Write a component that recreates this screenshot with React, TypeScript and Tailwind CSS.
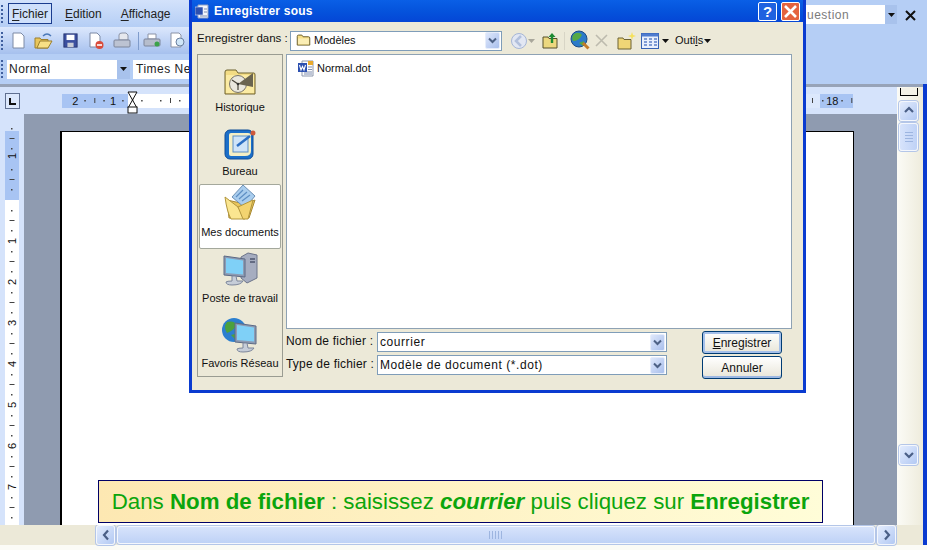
import type { ReactNode } from 'react';

const Grip = () => (
  <div className="flex flex-col gap-[2px] w-[3px] shrink-0">
    {[0, 1, 2, 3, 4].map((i) => (
      <div key={i} className="w-[2px] h-[2px] bg-[#3f5f9f]" />
    ))}
  </div>
);

const Chevron = ({ dir }: { dir: 'up' | 'down' | 'left' | 'right' }) => {
  const d = {
    up: 'M2 7 L6 3 L10 7',
    down: 'M2 4 L6 8 L10 4',
    left: 'M8 1.5 L4 6 L8 10.5',
    right: 'M4 1.5 L8 6 L4 10.5',
  }[dir];
  return (
    <svg width="12" height="12" viewBox="0 0 12 12">
      <path d={d} fill="none" stroke="#4a5f86" strokeWidth="2.2" />
    </svg>
  );
};

const ScrollBtn = ({ dir }: { dir: 'up' | 'down' | 'left' | 'right' }) => (
  <div className="w-[19px] h-[20px] shrink-0 flex items-center justify-center rounded-[3px] border border-[#f4f7fd] shadow-[0_0_0_1px_#b4c6e8] bg-gradient-to-br from-[#e3ecfd] to-[#b3c9f3]">
    <Chevron dir={dir} />
  </div>
);

const ComboArrow = () => (
  <div className="w-[15px] h-[17px] shrink-0 flex items-center justify-center rounded-[2px] border border-[#e6edfb] bg-gradient-to-br from-[#dfe8fb] to-[#a9bfec]">
    <svg width="9" height="7" viewBox="0 0 9 7">
      <path d="M1 1.5 L4.5 5 L8 1.5" fill="none" stroke="#4d6185" strokeWidth="2" />
    </svg>
  </div>
);

const SmallDrop = () => (
  <svg width="7" height="4" viewBox="0 0 7 4">
    <path d="M0 0 H7 L3.5 4 Z" fill="#111" />
  </svg>
);

const Folder = ({ size = 18 }: { size?: number }) => (
  <svg width={size} height={size} viewBox="0 0 18 18">
    <path d="M1.5 4 Q1.5 2.5 3 2.5 H7 L8.5 4.5 H15 Q16.5 4.5 16.5 6 V14.5 H1.5 Z" fill="#f7df86" stroke="#6e6230" strokeWidth="1.2" />
    <path d="M2.5 6.5 H15.5 V13.5 H2.5 Z" fill="#fbeeb4" />
  </svg>
);

const WordDoc = () => (
  <svg width="18" height="18" viewBox="0 0 18 18">
    <path d="M5 1 H16 V16 H5 Z" fill="#fdfdfd" stroke="#8c97ad" />
    <path d="M11 1 H16 V5 H11 Z" fill="#e9a92d" />
    <path d="M11 7 H15 M11 9.5 H15 M7 12 H15 M7 14 H15" stroke="#7e8db0" />
    <rect x="1" y="3" width="9" height="9" fill="#2c50b0" />
    <path d="M2.5 5 L4 10 L5.5 6.5 L7 10 L8.5 5" fill="none" stroke="#fff" strokeWidth="1.1" />
  </svg>
);

const HistoryIcon = () => (
  <svg width="34" height="30" viewBox="0 0 34 30">
    <path d="M2 5 Q2 3 4 3 H13 L15 6 H31 Q32 6 32 8 V27 H2 Z" fill="#f3dc84" stroke="#6e6230" />
    <path d="M3 8 H31 V26 H3 Z" fill="#fbeba3" />
    <circle cx="15" cy="17" r="8.5" fill="#e9e7de" stroke="#77736a" />
    <path d="M15 17 L30 6 L30 20 Z" fill="#6a6450" />
    <path d="M15 17 L9 13 M15 17 L15 23" stroke="#47443a" strokeWidth="1.2" />
    <circle cx="15" cy="17" r="1.3" fill="#333" />
  </svg>
);

const DesktopIcon = () => (
  <svg width="34" height="34" viewBox="0 0 34 34">
    <rect x="2" y="3" width="28" height="29" rx="5" fill="#1b6fc9" stroke="#0f4d97" />
    <path d="M6 8 Q6 6 8 6 H25 Q28 6 28 9 V24 Q28 29 22 29 H8 Q6 29 6 27 Z" fill="#f5efc5" />
    <rect x="10" y="9" width="15" height="16" fill="#cfe4f8" stroke="#5c8fc6" />
    <path d="M14 19 L27 9" stroke="#2a6ec2" strokeWidth="2.5" />
    <circle cx="30" cy="6" r="2.5" fill="#cf5a3c" />
  </svg>
);

const DocsIcon = () => (
  <svg width="34" height="38" viewBox="0 0 34 38">
    <path d="M4 16 L6 34 H26 L32 16 L22 20 Z" fill="#e9c65b" stroke="#a98a34" />
    <path d="M9 13 L20 1 L32 12 L22 24 Z" fill="#a9cdee" stroke="#6d90b4" />
    <path d="M13 13 L20 6 M16 15 L24 8 M19 17 L27 11" stroke="#5e8fc4" strokeWidth="1.2" />
    <path d="M2 13 L15 23 L22 35 H8 Q4 28 2 13 Z" fill="#fbe690" stroke="#b2963d" />
    <path d="M15 23 L30 16 L25 35 H20 Z" fill="#f3d470" stroke="#b2963d" />
  </svg>
);

const Monitor = ({ x, y }: { x: number; y: number }) => (
  <g transform={`translate(${x} ${y})`}>
    <path d="M1 1 L22 4 V22 L1 20 Z" fill="#8d9bb3" stroke="#5d6a85" />
    <path d="M3 3 L20 5.5 V19.5 L3 18 Z" fill="#7fd0f7" />
    <path d="M9 21 L13 21 L14 26 H20 Q18 30 9 30 Q3 30 3 27 Q4 26 9 26 Z" fill="#c6cdd8" stroke="#7c869b" />
  </g>
);

const ComputerIcon = () => (
  <svg width="38" height="36" viewBox="0 0 38 36">
    <path d="M20 5 L27 1 L36 3 V26 L26 31 L20 26 Z" fill="#a6adc0" stroke="#6c7489" />
    <path d="M29 7 H34 M29 10 H34" stroke="#4d566d" strokeWidth="1.3" />
    <Monitor x={2} y={3} />
  </svg>
);

const NetworkIcon = () => (
  <svg width="38" height="36" viewBox="0 0 38 36">
    <circle cx="13" cy="13" r="12" fill="#2c7fcf" />
    <path d="M6 5 Q13 3 16 8 Q12 14 6 16 Q2 10 6 5 Z M10 18 L18 16 L16 24 Z" fill="#4ca13d" />
    <Monitor x={13} y={5} />
  </svg>
);

const ToolIcon = ({ children }: { children: ReactNode }) => (
  <div className="w-[25px] h-[24px] shrink-0 flex items-center justify-center">{children}</div>
);

const MainTool = ({ children }: { children: ReactNode }) => (
  <div className="w-[26px] h-[24px] shrink-0 flex items-center justify-center">{children}</div>
);

const Place = ({ label, icon, box, selected }: { label: string; icon: ReactNode; box: string; selected?: boolean }) => (
  <div
    className={`w-[82px] shrink-0 flex flex-col items-center justify-end rounded-[2px] ${box} ${
      selected ? 'bg-white border border-[#a4a89c]' : ''
    }`}
  >
    <div className="flex-1 flex items-end justify-center">{icon}</div>
    <span className="mt-[3px] leading-[14px] whitespace-nowrap">{label}</span>
  </div>
);

const Field = ({ label, value }: { label: string; value: string }) => (
  <div className="flex items-center h-[20px]">
    <span className="w-[91px] shrink-0 pb-[2px] text-[12px] tracking-[0.2px] text-[#111] whitespace-nowrap">{label}</span>
    <div className="w-[290px] h-[20px] pl-[2px] pr-[1px] flex items-center justify-between bg-white border border-[#7f9db9]">
      <span className="text-[12px] tracking-[0.57px] text-[#111]">{value}</span>
      <ComboArrow />
    </div>
  </div>
);

const DlgButton = ({ children, primary }: { children: ReactNode; primary?: boolean }) => (
  <div
    className={`w-[80px] h-[23px] flex items-center justify-center rounded-[3px] border border-[#003c74] text-[12px] text-[#111] bg-gradient-to-b from-white to-[#e8e5d8] ${
      primary ? 'shadow-[inset_0_0_0_2px_#a5c0ea]' : 'shadow-[inset_0_-2px_0_#9db8e2]'
    }`}
  >
    {children}
  </div>
);

const Dialog = () => (
  <div className="absolute left-[189px] top-0 w-[617px] h-[393px] flex flex-col border-x-[3px] border-b-[3px] border-[#0a3bd0] bg-[#ece9d8] text-[11px] text-[#111]">
    <div className="h-[22px] shrink-0 flex items-center pl-[3px] pr-[3px] bg-gradient-to-b from-[#0a5fe6] via-[#0553dc] to-[#0546d6]">
      <svg width="14" height="15" viewBox="0 0 14 15">
        <path d="M3 1 H13 V14 H3 Z" fill="#f4f6fb" stroke="#8fa0c4" />
        <rect x="0" y="3" width="8" height="8" fill="#2c50b0" stroke="#dfe6f7" strokeWidth="0.6" />
        <path d="M9 5 H12 M9 8 H12 M5 12 H12" stroke="#7e8db0" />
      </svg>
      <span className="ml-[5px] text-[12px] font-bold text-white tracking-[0.2px]">Enregistrer sous</span>
      <div className="ml-auto flex items-center gap-[4px]">
        <div className="w-[19px] h-[19px] flex items-center justify-center rounded-[2px] border border-white bg-[#1f62e0] text-white text-[15px] font-bold leading-none">
          ?
        </div>
        <div className="w-[19px] h-[19px] flex items-center justify-center rounded-[2px] border border-white bg-[#e4633f]">
          <svg width="15" height="15" viewBox="0 0 15 15">
            <path d="M2 2 L13 13 M13 2 L2 13" stroke="#fff" strokeWidth="2.6" />
          </svg>
        </div>
      </div>
    </div>
    <div className="h-[32px] shrink-0 flex items-center pl-[5px] pt-[5px]">
      <span className="w-[93px] shrink-0 pb-[4px] text-[11.5px] whitespace-nowrap">Enregistrer dans :</span>
      <div className="w-[212px] h-[20px] flex items-center justify-between pl-[5px] pr-[1px] bg-white border border-[#7f9db9]">
        <div className="flex items-center gap-[3px]">
          <Folder size={15} />
          <span>Modèles</span>
        </div>
        <ComboArrow />
      </div>
      <div className="ml-[4px] flex items-center">
        <ToolIcon>
          <svg width="20" height="20" viewBox="0 0 20 20">
            <circle cx="10" cy="10" r="7.5" fill="#e2e7f3" stroke="#a6b6d6" />
            <path d="M12 5 L7 10 L12 15" fill="none" stroke="#b2c0dc" strokeWidth="2.5" />
          </svg>
        </ToolIcon>
        <div className="w-[6px] -ml-[3px] mr-[3px] opacity-30">
          <SmallDrop />
        </div>
        <ToolIcon>
          <svg width="18" height="18" viewBox="0 0 18 18">
            <path d="M2 5 H7 L8 6.5 H16 V16 H2 Z" fill="#ecd87f" stroke="#57512c" />
            <path d="M11 11 V4" stroke="#1d8a32" strokeWidth="2.4" />
            <path d="M7.5 5 L11 1 L14.5 5 Z" fill="#1d8a32" />
          </svg>
        </ToolIcon>
        <div className="w-px h-[18px] bg-[#d8d5c6] ml-[2px] mr-[3px]" />
        <ToolIcon>
          <svg width="21" height="21" viewBox="0 0 21 21">
            <circle cx="9" cy="9" r="8" fill="#2b7ac9" stroke="#1c4b86" />
            <path d="M4 4 Q9 1 12 5 Q9 11 3 11 Q1 7 4 4 Z M9 13 L14 11 L13 16 Z" fill="#57a943" />
            <path d="M13 13 L18.5 18.5" stroke="#c37b2a" strokeWidth="3" />
          </svg>
        </ToolIcon>
        <div className="-ml-[4px]">
          <ToolIcon>
            <svg width="15" height="15" viewBox="0 0 15 15">
              <path d="M2 2 L13 13 M13 2 L2 13" stroke="#bdbbae" strokeWidth="1.6" />
            </svg>
          </ToolIcon>
        </div>
        <ToolIcon>
          <svg width="20" height="19" viewBox="0 0 20 19">
            <path d="M1 7 H6 L7 8.5 H14 V18 H1 Z" fill="#f0d676" stroke="#6d6232" />
            <path d="M15 1 L16 4 L19 5 L16 6 L15 9 L14 6 L11 5 L14 4 Z" fill="#f6e15b" />
          </svg>
        </ToolIcon>
        <div className="ml-[2px] flex items-center gap-[3px]">
          <svg width="18" height="16" viewBox="0 0 18 16">
            <rect x="0.5" y="0.5" width="17" height="15" fill="#e8effc" stroke="#3762b4" />
            <rect x="0.5" y="0.5" width="17" height="3" fill="#4f7ccf" />
            <path d="M3 6 H6 M8 6 H11 M13 6 H16 M3 9 H6 M8 9 H11 M13 9 H16 M3 12 H6 M8 12 H11 M13 12 H16" stroke="#5c80c6" strokeWidth="1.4" />
          </svg>
          <SmallDrop />
        </div>
        <div className="ml-[6px] flex items-center gap-[1px]">
          <span>
            Outi<span className="underline">l</span>s
          </span>
          <SmallDrop />
        </div>
      </div>
    </div>
    <div className="flex-1 flex pl-[5px] pr-[11px]">
      <div className="w-[86px] h-[323px] shrink-0 flex flex-col items-center pt-[1px] border border-[#9a9c92] bg-[#ece9d8]">
        <Place label="Historique" icon={<HistoryIcon />} box="h-[64px] pb-[6px]" />
        <Place label="Bureau" icon={<DesktopIcon />} box="h-[64px] pb-[6px]" />
        <Place label="Mes documents" icon={<DocsIcon />} box="h-[65px] pb-[9px]" selected />
        <Place label="Poste de travail" icon={<ComputerIcon />} box="h-[65px] pb-[9px]" />
        <Place label="Favoris Réseau" icon={<NetworkIcon />} box="h-[62px] pb-[6px]" />
      </div>
      <div className="ml-[3px] flex-1 flex flex-col">
        <div className="h-[275px] shrink-0 pt-[5px] pl-[10px] flex items-start gap-[2px] bg-white border border-[#8ea2b4]">
          <WordDoc />
          <span className="leading-[17px]">Normal.dot</span>
        </div>
        <div className="mt-[2px] flex">
          <div className="flex flex-col gap-[3px] pt-[1px]">
            <Field label="Nom de fichier :" value="courrier" />
            <Field label="Type de fichier :" value="Modèle de document (*.dot)" />
          </div>
          <div className="ml-[35px] flex flex-col gap-[2px]">
            <DlgButton primary>
              <span>
                <span className="underline">E</span>nregistrer
              </span>
            </DlgButton>
            <DlgButton>Annuler</DlgButton>
          </div>
        </div>
      </div>
    </div>
  </div>
);

const HRuler = () => {
  const unit = 37.85;
  const origin = 151;
  const marks: ReactNode[] = [];
  for (let n = -2; n <= 18; n++) {
    const x = origin + n * unit;
    // what lies under the dialog is never seen
    if (x > 180 && x < 806) continue;
    if (n !== 0) {
      marks.push(
        <text key={`n${n}`} x={x} y="18" fontSize="11" textAnchor="middle" fill="#111" fontFamily="Liberation Sans, sans-serif">
          {Math.abs(n)}
        </text>,
      );
    }
    marks.push(<rect key={`a${n}`} x={x + 9} y="13" width="1.5" height="1.5" fill="#444" />);
    marks.push(<rect key={`b${n}`} x={x + 19} y="11" width="1" height="5" fill="#444" />);
    marks.push(<rect key={`c${n}`} x={x + 28} y="13" width="1.5" height="1.5" fill="#444" />);
  }
  marks.push(<rect key="t" x={812} y="11" width="1" height="5" fill="#444" />);
  marks.push(<rect key="d" x={822} y="13" width="1.5" height="1.5" fill="#444" />);
  return (
    <svg className="absolute left-0 top-0" width="897" height="27" viewBox="0 0 897 27">
      <rect x="62" y="7" width="66" height="14" fill="#a8c4f3" />
      <rect x="128" y="7" width="692" height="14" fill="#fff" />
      <rect x="806" y="7" width="14" height="14" fill="#dce8fc" />
      <rect x="820" y="7" width="33" height="14" fill="#a8c4f3" />
      <svg x="62" y="0" width="791" height="27" viewBox="62 0 791 27">
        {marks}
      </svg>
      <path d="M128 5 H137 L132.5 13 L137 21 H128 L132.5 13 Z" fill="#fff" stroke="#111" />
      <rect x="128" y="20" width="9" height="6" fill="#fff" stroke="#111" />
    </svg>
  );
};

const VRuler = () => {
  const unit = 41;
  const origin = 200;
  const marks: ReactNode[] = [];
  for (let n = -2; n <= 7; n++) {
    const y = origin + n * unit - 114;
    if (n !== 0 && n !== -2) {
      const ty = n === -1 ? y - 3 : y;
      marks.push(
        <text
          key={`n${n}`}
          x="12"
          y={ty + 4}
          fontSize="11"
          textAnchor="middle"
          fill="#111"
          fontFamily="Liberation Sans, sans-serif"
          transform={`rotate(-90 12 ${ty})`}
        >
          {Math.abs(n)}
        </text>,
      );
    }
    marks.push(<rect key={`a${n}`} x="11" y={y + 10} width="1.5" height="1.5" fill="#444" />);
    marks.push(<rect key={`b${n}`} x="9.5" y={y + 20} width="5" height="1" fill="#444" />);
    marks.push(<rect key={`c${n}`} x="11" y={y + 30} width="1.5" height="1.5" fill="#444" />);
  }
  return (
    <svg width="24" height="411" viewBox="0 0 24 411" className="shrink-0 bg-[#d5e3fb]">
      <rect x="5" y="17" width="14" height="394" fill="#fff" />
      <rect x="5" y="17" width="14" height="69" fill="#a8c4f3" />
      {marks}
    </svg>
  );
};

export default function App() {
  return (
    <div className="relative w-[927px] h-[550px] overflow-hidden flex flex-col bg-white font-['Liberation_Sans',Arial,sans-serif]">
      <div className="h-[87px] shrink-0 flex flex-col bg-[#b5cef5] border-b-[3px] border-[#97a3b8]">
        <div className="h-[27px] shrink-0 flex items-center text-[12px] text-[#222]">
          <div className="w-[500px] h-[27px] shrink-0 flex items-center pl-[1px] bg-gradient-to-b from-[#d3e2fb] to-[#b5cef5]">
            <Grip />
            <div className="ml-[4px] w-[44px] h-[21px] flex items-center justify-center border border-[#1b3d8f] bg-[#cfe0fb]">
              <span className="underline decoration-1 underline-offset-2">F</span>ichier
            </div>
            <span className="ml-[13px]">
              <span className="underline underline-offset-2">E</span>dition
            </span>
            <span className="ml-[19px]">
              <span className="underline underline-offset-2">A</span>ffichage
            </span>
          </div>
          <div className="ml-auto mr-[30px] mt-[2px] w-[91px] h-[19px] flex items-center justify-between bg-white text-[12px] text-[#7b7b7b] tracking-[0.5px]">
            <span className="pl-[1px]">uestion</span>
            <div className="w-[12px] h-[19px] flex items-center justify-center bg-[#a8c2ec]">
              <SmallDrop />
            </div>
          </div>
          <svg className="absolute left-[905px] top-[10px]" width="11" height="11" viewBox="0 0 11 11">
            <path d="M1 1 L10 10 M10 1 L1 10" stroke="#111" strokeWidth="2" />
          </svg>
        </div>
        <div className="w-[500px] h-[27px] shrink-0 flex items-center pl-[1px] bg-gradient-to-b from-[#dce8fc] to-[#a6c0ee]">
          <Grip />
          <div className="ml-[1px] flex items-center">
            <MainTool>
              <svg width="17" height="18" viewBox="0 0 17 18">
                <path d="M3 1 H11 L14 4 V16 H3 Z" fill="#fff" stroke="#7d8aa5" />
              </svg>
            </MainTool>
            <MainTool>
              <svg width="20" height="18" viewBox="0 0 20 18">
                <path d="M1 6 H6 L7 7.5 H14 V16 H1 Z" fill="#e9c65b" stroke="#9b7f2e" />
                <path d="M3 16 L6 9 H18 L14 16 Z" fill="#f8df85" stroke="#9b7f2e" />
                <path d="M9 4 Q13 0 17 4" fill="none" stroke="#4a78b8" strokeWidth="1.4" />
              </svg>
            </MainTool>
            <MainTool>
              <svg width="15" height="15" viewBox="0 0 17 17">
                <rect x="1" y="1" width="15" height="15" fill="#3b4f9f" stroke="#25336d" />
                <rect x="4" y="2" width="9" height="6" fill="#fff" />
                <rect x="5" y="11" width="7" height="5" fill="#c8ccd6" />
              </svg>
            </MainTool>
            <MainTool>
              <svg width="18" height="18" viewBox="0 0 18 18">
                <path d="M3 1 H10 L13 4 V15 H3 Z" fill="#fff" stroke="#7d8aa5" />
                <circle cx="12.5" cy="13" r="4" fill="#d94c3c" />
                <path d="M10 13 H15" stroke="#fff" strokeWidth="1.6" />
              </svg>
            </MainTool>
            <MainTool>
              <svg width="18" height="18" viewBox="0 0 18 18">
                <path d="M6 8 V3 Q6 1 9 1 H13 L15 3 V8 Z" fill="#e6e8ee" stroke="#8b93a6" />
                <rect x="1" y="8" width="16" height="7" rx="1" fill="#bcc3d2" stroke="#7c859a" />
              </svg>
            </MainTool>
            <div className="ml-[3px] w-px h-[18px] bg-[#7f9ccc]" />
            <MainTool>
              <svg width="18" height="18" viewBox="0 0 18 18">
                <path d="M5 2 H13 V7 H5 Z" fill="#fff" stroke="#8b93a6" />
                <rect x="1" y="7" width="16" height="7" rx="1" fill="#b6bdcc" stroke="#7c859a" />
                <circle cx="14" cy="12" r="2.5" fill="#3ca24a" />
              </svg>
            </MainTool>
            <MainTool>
              <svg width="18" height="18" viewBox="0 0 18 18">
                <path d="M2 1 H10 L12 3 V15 H2 Z" fill="#fff" stroke="#8b93a6" />
                <circle cx="11" cy="10" r="4" fill="#cfe6f8" stroke="#6a7f9f" />
              </svg>
            </MainTool>
          </div>
        </div>
        <div className="mt-[3px] h-[24px] shrink-0 flex items-center pl-[1px] text-[12px] text-[#222]">
          <Grip />
          <div className="ml-[3px] w-[123px] h-[19px] flex items-center justify-between bg-white tracking-[0.5px]">
            <span className="pl-[2px]">Normal</span>
            <div className="w-[13px] h-[19px] flex items-center justify-center bg-[#a8c2ec]">
              <SmallDrop />
            </div>
          </div>
          <div className="ml-[3px] w-[60px] h-[19px] flex items-center pl-[3px] bg-white tracking-[0.5px] whitespace-nowrap">
            Times New
          </div>
        </div>
      </div>

      <div className="flex-1 flex min-h-0">
        <div className="w-[897px] shrink-0 flex flex-col">
          <div className="relative h-[27px] shrink-0 bg-[#d5e3fb]">
            <div className="absolute left-[5px] top-[6px] w-[15px] h-[16px] flex items-center justify-center bg-[#dce8fc] border border-[#5f6f90]">
              <div className="w-[7px] h-[7px] border-l-2 border-b-2 border-[#111]" />
            </div>
            <HRuler />
          </div>
          <div className="flex-1 flex min-h-0">
            <VRuler />
            <div className="relative flex-1 pt-[17px] pl-[36px] pr-[43px] bg-[#8f9bb0]">
              <div className="h-full bg-white border-l-[2px] border-r border-t border-black" />
              <div className="absolute left-[74px] top-[366px] w-[725px] h-[43px] flex items-center justify-center border border-[#000066] bg-gradient-to-r from-[#fde8b2] to-[#fffdd8] text-[22.3px] text-[#0ca50c] whitespace-nowrap">
                <span>
                  Dans <b>Nom de fichier</b> : saisissez <b><i>courrier</i></b> puis cliquez sur <b>Enregistrer</b>
                </span>
              </div>
            </div>
          </div>
        </div>
        <div className="flex-1 flex bg-gradient-to-r from-[#fbfbf6] to-[#ece9d8]">
          <div className="w-[27px] flex flex-col items-center pr-[4px]">
            <div className="mt-[1px] w-[18px] h-[8px] bg-[#f3f1e6] border-x border-b border-black" />
            <div className="mt-[5px]">
              <ScrollBtn dir="up" />
            </div>
            <div className="mt-[2px] w-[19px] h-[28px] flex flex-col items-center justify-center gap-[2px] rounded-[3px] border border-[#f4f7fd] shadow-[0_0_0_1px_#b4c6e8] bg-gradient-to-r from-[#d7e3fb] to-[#bfd2f6]">
              <div className="w-[8px] h-px bg-[#9db5e0]" />
              <div className="w-[8px] h-px bg-[#9db5e0]" />
              <div className="w-[8px] h-px bg-[#9db5e0]" />
              <div className="w-[8px] h-px bg-[#9db5e0]" />
            </div>
            <div className="mt-[294px]">
              <ScrollBtn dir="down" />
            </div>
          </div>
        </div>
      </div>

      <div className="h-[25px] shrink-0 flex flex-col bg-[#fbfbf6]">
        <div className="h-[20px] flex items-center pl-[96px] pr-[31px] bg-[#ece9d8]">
          <ScrollBtn dir="left" />
          <div className="ml-[2px] flex-1 h-[18px] flex items-center justify-center gap-[1px] rounded-[3px] border border-[#f4f7fd] shadow-[0_0_0_1px_#b4c6e8] bg-gradient-to-b from-[#d7e3fb] to-[#bfd2f6]">
            {[0, 1, 2, 3, 4].map((i) => (
              <div key={i} className="w-px h-[8px] bg-[#9db5e0] mr-px" />
            ))}
          </div>
          <div className="ml-[2px]">
            <ScrollBtn dir="right" />
          </div>
        </div>
      </div>
      <div className="absolute right-0 top-[84px] w-[4px] h-[461px] bg-[#0a3bd0]" />
      <Dialog />
    </div>
  );
}
